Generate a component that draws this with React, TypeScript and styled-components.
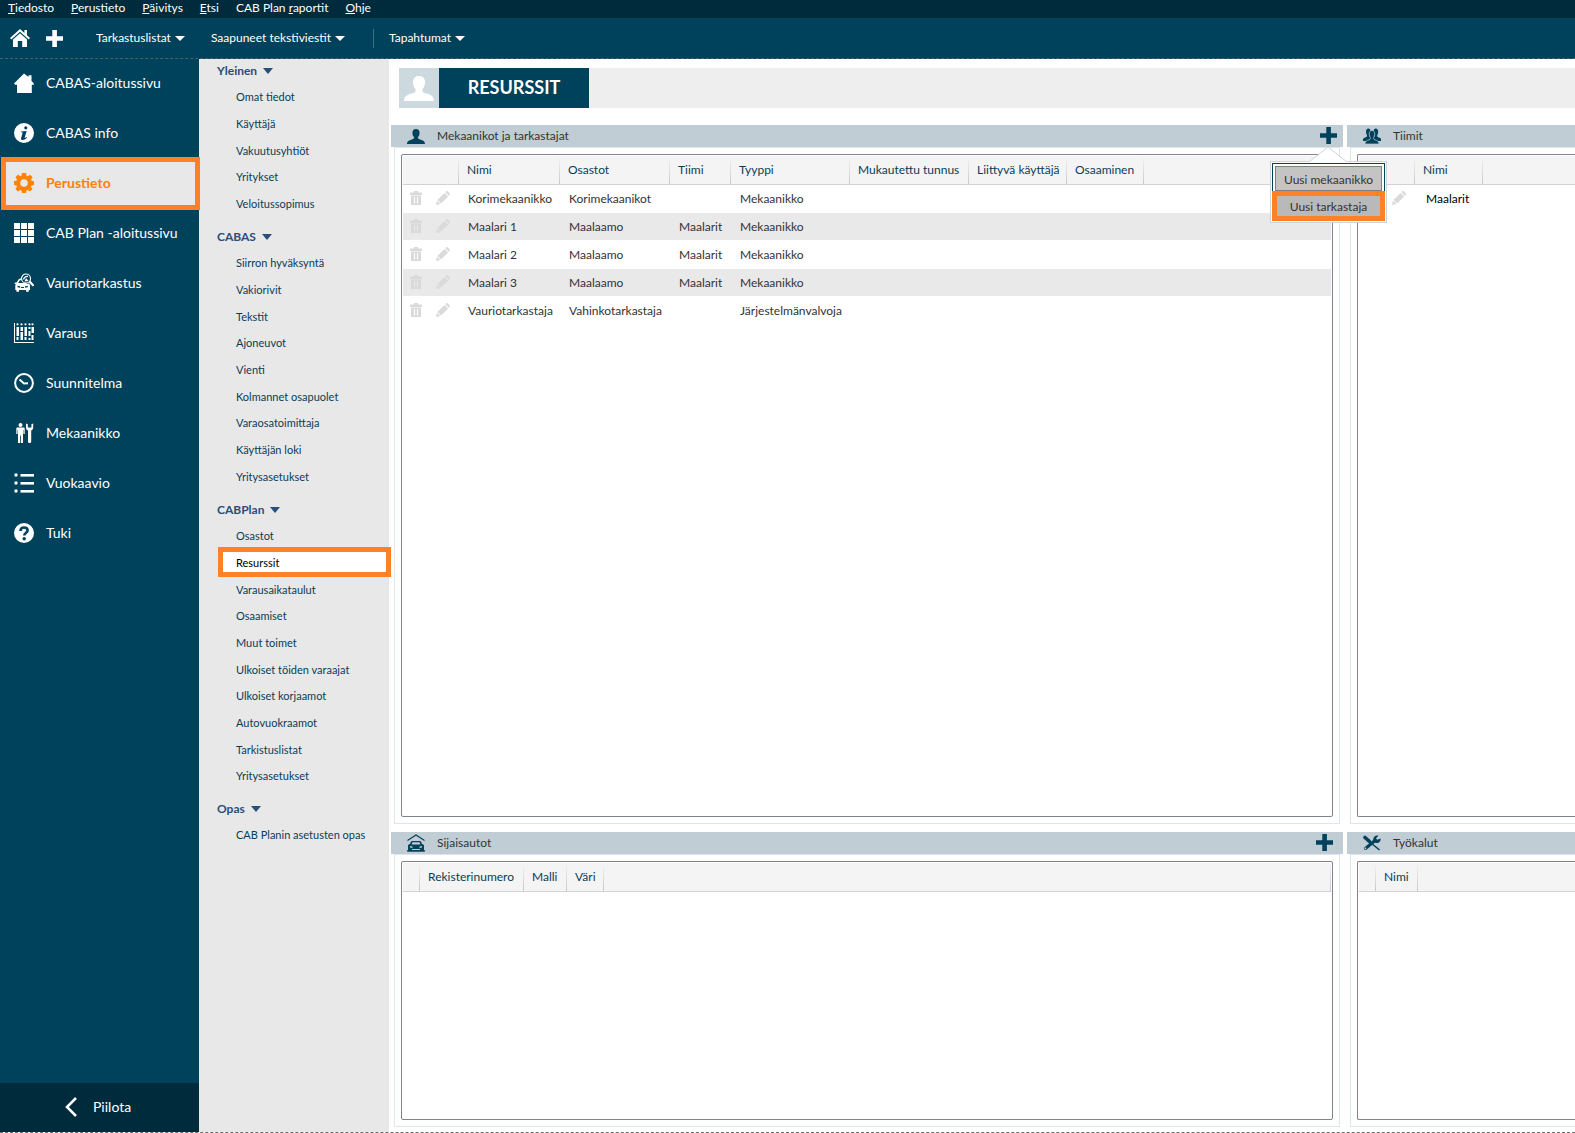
import React from 'react';
import styled, { createGlobalStyle, css } from 'styled-components';

const navy = '#00425c';
const deepNavy = '#002b3d';
const orange = '#ff8127';
const slate = '#c0cdd4';
const frame = '#dfe6e9';

const GlobalStyle = createGlobalStyle`
  *, *::before, *::after { box-sizing: border-box; }
  body {
    margin: 0;
    background: #fff;
    color: #333;
    font-family: Lato, "Open Sans", sans-serif;
    font-size: 12px;
    line-height: 16px;
  }
  button { font: inherit; color: inherit; background: none; border: 0; padding: 0; cursor: pointer; }
  a { color: inherit; text-decoration: none; }
  ul { list-style: none; margin: 0; padding: 0; }
  svg { display: block; flex: none; }
`;

const Page = styled.div`
  display: flex;
  flex-direction: column;
  height: 100vh;
  overflow: hidden;
  border-bottom: 1px dashed #6d6d6d;
`;

const MenuBar = styled.nav`
  display: flex;
  flex: none;
  gap: 17px;
  height: 18px;
  padding: 0 8px;
  background: ${deepNavy};
  color: #fff;
`;

const MenuButton = styled.button`
  white-space: nowrap;
  line-height: 16px;
  height: 16px;
`;

const Toolbar = styled.header`
  display: flex;
  flex: none;
  align-items: center;
  height: 41px;
  padding-left: 10px;
  background: ${navy};
  border-bottom: 1px dashed #46606c;
  color: #fff;
`;

const ToolIcons = styled.div`
  display: flex;
  align-items: center;
  gap: 16px;
  width: 86px;
`;

const ToolMenu = styled.button<{ $gap: number }>`
  display: flex;
  align-items: center;
  gap: 4px;
  margin-right: ${(p) => p.$gap}px;
  white-space: nowrap;
`;

const Caret = styled.span<{ $big?: boolean }>`
  border-style: solid;
  border-color: currentColor transparent transparent;
  border-width: ${(p) => (p.$big ? '6px 5px 0' : '5px 5px 0')};
`;

const Divider = styled.span`
  width: 1px;
  height: 19px;
  margin-right: 15px;
  background: #3f7086;
`;

const Body = styled.div`
  display: flex;
  flex: 1;
  min-height: 0;
`;

const Sidebar = styled.nav`
  display: flex;
  flex: none;
  flex-direction: column;
  justify-content: space-between;
  width: 199px;
  background: ${navy};
  color: #fff;
  font-size: 14px;
`;

const SideLink = styled.a<{ $active?: boolean }>`
  display: flex;
  align-items: center;
  gap: 12px;
  height: 50px;
  padding: 0 14px 2px;
  white-space: nowrap;
  ${(p) =>
    p.$active &&
    css`
      position: relative;
      z-index: 1;
      height: 53px;
      margin: -2px -1px -1px 1px;
      padding: 0 8px 2px;
      border: 5px solid ${orange};
      background: #e8e8e8;
      color: #ff8200;
      font-weight: 700;
    `}
`;

const HideButton = styled.button`
  display: flex;
  align-items: center;
  gap: 16px;
  height: 49px;
  padding: 0 0 2px 65px;
  background: ${deepNavy};
`;

const SubNav = styled.nav`
  display: flex;
  flex: none;
  flex-direction: column;
  gap: 8px;
  width: 190px;
  background: #e8e8e8;
  color: #0b3c55;
  font-size: 11px;
`;

const GroupToggle = styled.button`
  display: flex;
  align-items: center;
  gap: 6px;
  height: 24px;
  padding-left: 18px;
  color: #2a4d7c;
  font-size: 12px;
  font-weight: 700;
`;

const SubItem = styled.li`
  height: 27px;
  &:nth-child(3n):not(:last-child) { height: 26px; }
`;

const SubLink = styled.a<{ $active?: boolean }>`
  display: block;
  padding-left: 37px;
  line-height: 27px;
  white-space: nowrap;
  ${(p) =>
    p.$active &&
    css`
      position: relative;
      top: -2px;
      z-index: 1;
      margin: 0 -2px 0 19px;
      padding: 2px 0 0 13px;
      border: 5px solid ${orange};
      background: #fff;
      color: #000;
      line-height: 18px;
    `}
`;

const Main = styled.main`
  display: flex;
  flex: 1;
  flex-direction: column;
  min-width: 0;
  padding: 9px 0 5px 2px;
`;

const TitleBar = styled.div`
  display: flex;
  flex: none;
  height: 40px;
  margin: 0 0 17px 8px;
  background: #eee;
`;

const TitleIcon = styled.div`
  display: grid;
  place-items: center;
  width: 40px;
  background: #ccd9df;
  color: #fff;
`;

const Title = styled.h1`
  width: 150px;
  margin: 0;
  background: ${navy};
  color: #fff;
  font-size: 18px;
  line-height: 38px;
  text-align: center;
`;

const Panels = styled.div`
  display: grid;
  flex: 1;
  min-height: 0;
  grid-template-columns: minmax(0, 1fr) 228px;
  grid-template-rows: 699fr 295fr;
  gap: 8px 4px;
`;

const PanelBox = styled.section`
  display: flex;
  flex-direction: column;
  min-height: 0;
`;

const PanelHeader = styled.header<{ $end: number }>`
  display: flex;
  flex: none;
  align-items: center;
  height: 22px;
  padding: 0 ${(p) => p.$end}px 0 16px;
  background: ${slate};
`;

const HeaderIcon = styled.span`
  color: ${navy};
`;

const PanelTitle = styled.h2`
  flex: 1;
  margin: 0 0 0 12px;
  font-size: 12px;
  font-weight: 400;
  line-height: 20px;
`;

const PanelBody = styled.div<{ $cut?: boolean }>`
  display: flex;
  flex: 1;
  min-height: 0;
  margin: 0 3px;
  padding: 6px;
  border: 1px solid ${frame};
  ${(p) => p.$cut && 'margin-right: 0; padding-right: 0; border-right: 0;'}
`;

const Th = styled.th`
  height: 29px;
  padding: 0 0 1px 8px;
  border-bottom: 1px solid #d2d2d2;
  background: linear-gradient(#f4f4f4, #c8c8c8) right / 1px 100% no-repeat #f4f4f4;
  color: #0b3c55;
  font-weight: 400;
  text-align: left;
  white-space: nowrap;
`;

const GridFrame = styled.div<{ $cut?: boolean }>`
  flex: 1;
  min-width: 0;
  padding: 1px;
  border: 1px solid #80848f;
  border-radius: 2px;
  overflow: hidden;
  ${(p) =>
    p.$cut &&
    css`
      padding-right: 0;
      border-right: 0;
      border-radius: 2px 0 0 2px;
      ${Th}:last-child { background: #f4f4f4; }
    `}
`;

const Table = styled.table`
  width: 100%;
  table-layout: fixed;
  border-collapse: separate;
  border-spacing: 0;
`;

const Td = styled.td<{ $dark?: boolean }>`
  height: 28px;
  padding: 0 0 0 ${(p) => (p.$dark ? 11 : 9)}px;
  border-bottom: 1px solid #fff;
  color: ${(p) => (p.$dark ? '#000' : 'inherit')};
  white-space: nowrap;
`;

const Row = styled.tr`
  &:nth-child(even) td { background: #e9e9e9; }
`;

const RowActions = styled.div`
  display: flex;
  gap: 14px;
  padding-bottom: 1px;
  margin-left: -2px;
  color: #dadada;
`;

const AddWrap = styled.div`
  position: relative;
  display: flex;
  align-items: flex-start;
  height: 18px;
  color: ${navy};
`;

const Popup = styled.div`
  position: absolute;
  z-index: 5;
  top: 34px;
  right: -50px;
  width: 117px;
  padding: 1px;
  border: 1px solid #c8d6de;
  background: #fff;
  color: #333;
`;

const PopupArrow = styled.svg`
  position: absolute;
  top: -16px;
  left: 38px;
`;

const PopupFocus = styled.div`
  height: 28px;
  padding: 2px;
  border: 1px solid ${navy};
  border-bottom: 0;
`;

const PopupButton = styled.button<{ $marked?: boolean }>`
  display: block;
  width: 100%;
  height: 25px;
  padding-top: 2px;
  border: 1px solid #808080;
  background: #c4c4c4;
  line-height: 20px;
  white-space: nowrap;
  ${(p) =>
    p.$marked &&
    css`
      height: 30px;
      border: 5px solid ${orange};
      background: #b9b9b9;
      line-height: 16px;
    `}
`;

type IconProps = { size?: number };

const Svg = ({ size = 20, h, box = '0 0 20 20', children }: { size?: number; h?: number; box?: string; children: React.ReactNode }) => (
  <svg width={size} height={h ?? size} viewBox={box} fill="currentColor" aria-hidden="true">
    {children}
  </svg>
);

const RoofHome = () => (
  <Svg>
    <path d="M10 1 0 10l1.300 1.400L10 3.700l8.700 7.700L20 10l-3-2.700V2h-2.600v3Z" />
    <path d="M10 5.200 3 11.400V19h4.800v-6h4.400v6H17v-7.600Z" />
  </Svg>
);

const SolidHome = () => (
  <Svg>
    <path d="M10 .5 0 10.500l1.200 1.200H3V20h14.800v-8.300H20l-.5-1.600-2-2V2.300h-3V4Z" />
  </Svg>
);

const Info = () => (
  <Svg>
    <path
      fillRule="evenodd"
      d="M10 0a10 10 0 1 0 0 20 10 10 0 0 0 0-20Zm1.800 3.200a1.600 1.600 0 1 1 0 3.200 1.600 1.600 0 0 1 0-3.200ZM7 8.600 12.600 8l-1.900 6.400c-.2.800.4.700 1.800-.5l.5.600c-1.500 1.800-3 2.500-4.200 2.500-1.500 0-2-.9-1.600-2.300L8.600 10c.2-.6-.3-.8-1.600-.7Z"
    />
  </Svg>
);

const Gear = () => (
  <Svg>
    <path
      fillRule="evenodd"
      d="M8 0h4l.5 2.700 1.300.6L16 1.700 18.600 4.300l-1.500 2.200.5 1.300L20 8.200v3.800l-2.500.5-.6 1.300 1.600 2.200-2.600 2.600-2.200-1.600-1.300.6L12 20H8l-.5-2.500-1.300-.5L4 18.500 1.400 15.900 3 13.700l-.6-1.300L0 12V8.100l2.500-.4L3 6.400 1.500 4.200 4.100 1.600l2.200 1.600 1.200-.5Zm2 6.200a3.800 3.800 0 1 0 0 7.600 3.800 3.800 0 0 0 0-7.600Z"
    />
  </Svg>
);

const Tiles = () => (
  <Svg>
    {[0, 7, 14].map((y) => [0, 7, 14].map((x) => <rect key={`${x}-${y}`} x={x} y={y} width="6" height="6" />))}
  </Svg>
);

const CarSearch = () => (
  <Svg>
    <path
      fillRule="evenodd"
      d="M1 9.500h1.600L4.500 6.500C5 5.800 6 5.500 7 5.500V7c-.8 0-1.200.2-1.500.7L4.200 10h7.600c1 .6 2.200.8 3.200.6l1 1.400v5h-1.300v1.800h-2.600V17H5v1.800H2.400V17H1.300v-5L2 11H.4Zm2.500 3.200v1.600l2.700.5v-1.500Zm10.300 0-2.700.6v1.500l2.700-.5ZM7 14v1h3v-1Z"
    />
    <circle cx="12" cy="5.500" r="4.500" fill="none" stroke="currentColor" strokeWidth="1.200" />
    <path d="M9.500 6.500c.5-2 2.500-3.500 4.500-3" fill="none" stroke="currentColor" strokeWidth="1.300" />
    <path d="M10.500 8.500 12 5l2.500 3Z" />
    <path d="m14.600 9.200 1.600-1.600 4 4.400-1.400 1.500Z" />
  </Svg>
);

const Booking = () => (
  <Svg>
    <path d="M0 0h1v19h19v1H0Z" />
    {[3, 7, 11, 15, 18].map((x) => (
      <circle key={x} cx={x + 0.5} cy="1.300" r="1.100" />
    ))}
    <path d="M2.500 4h2.500v9H2.500zM2.500 14h2v3h-2zM6.500 4h2.500v4H6.500zM6.500 9h2.500v8H6.500zM10.500 4h2.500v9h-2.500zM10.500 14h2v3h-2zM14.500 8h2v5h-2zM14.500 4h2v2h-2zM17.500 4h2.500v6h-2.500zM17.500 12h2v5h-2zM14.500 15h2v2h-2z" />
  </Svg>
);

const Clock = () => (
  <Svg>
    <circle cx="10" cy="10" r="8.900" fill="none" stroke="currentColor" strokeWidth="2" />
    <path d="m5.500 6.500 4.500 4 4-.2" fill="none" stroke="currentColor" strokeWidth="2" />
  </Svg>
);

const Mechanic = () => (
  <Svg>
    <circle cx="6.500" cy="2" r="2" />
    <path d="M3.500 4.500h6c.8 0 1.200.4 1.200 1.200V11H9.400V6.800H9V20H6.900v-7.500h-.8V20H4V6.800h-.4V11H2.300V5.700c0-.8.400-1.200 1.200-1.200Z" />
    <path d="M12 .5v4c0 1.500.8 2.500 2 3V18.600a1.600 1.600 0 0 0 3.200 0V7.500c1.200-.5 2-1.500 2-3v-4l-1.800.8V4.500h-3.600V1.300Z" />
  </Svg>
);

const Flow = () => (
  <Svg>
    {[2, 10, 18].map((y) => (
      <React.Fragment key={y}>
        <circle cx="2" cy={y} r="1.700" />
        <rect x="6.500" y={y - 1} width="13.500" height="2.600" />
      </React.Fragment>
    ))}
  </Svg>
);

const Help = () => (
  <Svg>
    <circle cx="10" cy="10" r="10" />
    <path d="M6.500 8C6.500 5.500 8 4.500 10 4.500S13.600 5.700 13.600 7.500c0 2.300-3.300 2.300-3.300 5" fill="none" stroke={navy} strokeWidth="2.600" />
    <circle cx="10.200" cy="15.800" r="1.700" fill={navy} />
  </Svg>
);

const Plus = ({ size = 17 }: IconProps) => (
  <Svg size={size} box="0 0 17 17">
    <path d="M6.300 0h4.600v6.300H17v4.400h-6.100V17H6.300v-6.300H0V6.300h6.300Z" />
  </Svg>
);

const Chevron = () => (
  <Svg size={12} h={20} box="0 0 12 20">
    <path d="M11 1 2 10l9 9" fill="none" stroke="currentColor" strokeWidth="2.500" />
  </Svg>
);

const personPath = 'M15 0c4 0 6 2.500 6 6.500 0 3-1 5-2.500 6.500v2.500c0 .8 1 1.200 3 1.800 5 1.500 8.500 2.500 8.500 7.700H0c0-5.200 3.500-6.200 8.500-7.700 2-.6 3-1 3-1.800V13C10 11.500 9 9.500 9 6.500 9 2.500 11 0 15 0Z';

const Person = ({ size = 30 }: IconProps) => (
  <Svg size={size} h={Math.round((size * 25) / 30)} box="0 0 30 25">
    <path d={personPath} />
  </Svg>
);

const People = () => (
  <Svg size={18} h={16} box="0 0 36 32">
    <path d={personPath} transform="translate(-1 1) scale(.78 1)" />
    <path d={personPath} transform="translate(14 1) scale(.78 1)" />
    <path d={personPath} transform="translate(4 5) scale(.93 1.080)" stroke={slate} strokeWidth="1.400" />
  </Svg>
);

const Garage = () => (
  <Svg size={18} box="0 0 18 18">
    <path d="M.5 6.500 9 1l8.500 5.500" fill="none" stroke="currentColor" strokeWidth="1.200" />
    <path
      fillRule="evenodd"
      d="M5 7h8c1 0 1.500 1.500 2 3 1.400.3 2 1 2 2v4h.8v1.800H.2V16H1v-4c0-1 .6-1.700 2-2 .5-1.500 1-3 2-3Zm.4 1.300L4.700 10.500h8.600l-.7-2.200ZM3 12v1.600l2.500.3v-1.300Zm12 0-2.500.6v1.300l2.500-.3ZM5 15v1h8v-1Z"
    />
  </Svg>
);

const Tools = () => (
  <Svg size={18} h={16} box="0 0 18 16">
    <path d="M1.500 2.500 16.500 15" stroke="currentColor" strokeWidth="1.500" />
    <path d="M2 2.500 6.500 6.500" stroke="currentColor" strokeWidth="3.600" strokeLinecap="round" />
    <path d="M2.500 13.500 12 5.500" stroke="currentColor" strokeWidth="3" strokeLinecap="round" />
    <path d="M15.500.8 13 3.200l1.200 1.600 3.400-1.300c.4 2.900-1.600 5-4.600 4.500-2.200-.4-3.200-2.200-2.700-4.300C11 1.200 13.200 0 15.500.8Z" />
    <circle cx="2.500" cy="13.400" r=".9" fill={slate} />
  </Svg>
);

const Trash = () => (
  <Svg size={12} h={14} box="0 0 12 14">
    <path fillRule="evenodd" d="M4 0h4v1.500h4V4H0V1.500h4ZM1 4.500h10V14H1ZM4 6v6.500h1V6Zm3 0v6.500h1V6Z" />
  </Svg>
);

const Pencil = () => (
  <Svg size={14} box="0 0 14 14">
    <path d="m0 14 1-4.500L4.500 13ZM1.600 8.700 8.600 1.900l3.500 3.500-7 7ZM9.300 1.200 10.500 0H11.500L14 2.500V3.500L12.800 4.700Z" />
  </Svg>
);

const menus: [string, string, string][] = [
  ['', 'T', 'iedosto'],
  ['', 'P', 'erustieto'],
  ['', 'P', 'äivitys'],
  ['', 'E', 'tsi'],
  ['CAB Plan ', 'r', 'aportit'],
  ['', 'O', 'hje'],
];

const sideItems: [string, React.ReactNode][] = [
  ['CABAS-aloitussivu', <SolidHome />],
  ['CABAS info', <Info />],
  ['Perustieto', <Gear />],
  ['CAB Plan -aloitussivu', <Tiles />],
  ['Vauriotarkastus', <CarSearch />],
  ['Varaus', <Booking />],
  ['Suunnitelma', <Clock />],
  ['Mekaanikko', <Mechanic />],
  ['Vuokaavio', <Flow />],
  ['Tuki', <Help />],
];

const groups: { title: string; items: string[] }[] = [
  { title: 'Yleinen', items: ['Omat tiedot', 'Käyttäjä', 'Vakuutusyhtiöt', 'Yritykset', 'Veloitussopimus'] },
  {
    title: 'CABAS',
    items: ['Siirron hyväksyntä', 'Vakiorivit', 'Tekstit', 'Ajoneuvot', 'Vienti', 'Kolmannet osapuolet', 'Varaosatoimittaja', 'Käyttäjän loki', 'Yritysasetukset'],
  },
  {
    title: 'CABPlan',
    items: ['Osastot', 'Resurssit', 'Varausaikataulut', 'Osaamiset', 'Muut toimet', 'Ulkoiset töiden varaajat', 'Ulkoiset korjaamot', 'Autovuokraamot', 'Tarkistuslistat', 'Yritysasetukset'],
  },
  { title: 'Opas', items: ['CAB Planin asetusten opas'] },
];

type Column = [label: string, width: number];

const staffColumns: Column[] = [
  ['', 56], ['Nimi', 101], ['Osastot', 110], ['Tiimi', 61], ['Tyyppi', 119],
  ['Mukautettu tunnus', 119], ['Liittyvä käyttäjä', 98], ['Osaaminen', 77],
];

const staffRows = [
  ['Korimekaanikko', 'Korimekaanikot', '', 'Mekaanikko'],
  ['Maalari 1', 'Maalaamo', 'Maalarit', 'Mekaanikko'],
  ['Maalari 2', 'Maalaamo', 'Maalarit', 'Mekaanikko'],
  ['Maalari 3', 'Maalaamo', 'Maalarit', 'Mekaanikko'],
  ['Vauriotarkastaja', 'Vahinkotarkastaja', '', 'Järjestelmänvalvoja'],
];

const DataTable = ({ columns, rows = [], dark }: { columns: Column[]; rows?: string[][]; dark?: boolean }) => (
  <Table>
    <colgroup>
      {columns.map(([, width], i) => (
        <col key={i} width={width} />
      ))}
      <col />
    </colgroup>
    <thead>
      <tr>
        {columns.map(([label], i) => (
          <Th key={i}>{label}</Th>
        ))}
        <Th />
      </tr>
    </thead>
    <tbody>
      {rows.map((cells) => (
        <Row key={cells[0]}>
          <Td>
            <RowActions>
              <button aria-label="Poista"><Trash /></button>
              <button aria-label="Muokkaa"><Pencil /></button>
            </RowActions>
          </Td>
          {columns.slice(1).map((_, i) => (
            <Td key={i} $dark={dark}>{cells[i]}</Td>
          ))}
          <Td />
        </Row>
      ))}
    </tbody>
  </Table>
);

type PanelProps = {
  icon: React.ReactNode;
  title: string;
  end?: number;
  cut?: boolean;
  action?: React.ReactNode;
  children: React.ReactNode;
};

const Panel = ({ icon, title, end = 0, cut, action, children }: PanelProps) => (
  <PanelBox>
    <PanelHeader $end={end}>
      <HeaderIcon>{icon}</HeaderIcon>
      <PanelTitle>{title}</PanelTitle>
      {action}
    </PanelHeader>
    <PanelBody $cut={cut}>
      <GridFrame $cut={cut}>{children}</GridFrame>
    </PanelBody>
  </PanelBox>
);

export default function App() {
  return (
    <Page>
      <GlobalStyle />
      <MenuBar>
        {menus.map(([before, key, after]) => (
          <MenuButton key={key + after}>
            {before}
            <u>{key}</u>
            {after}
          </MenuButton>
        ))}
      </MenuBar>
      <Toolbar>
        <ToolIcons>
          <button aria-label="Aloitussivu"><RoofHome /></button>
          <button aria-label="Uusi"><Plus /></button>
        </ToolIcons>
        <ToolMenu $gap={26}>Tarkastuslistat <Caret /></ToolMenu>
        <ToolMenu $gap={28}>Saapuneet tekstiviestit <Caret /></ToolMenu>
        <Divider />
        <ToolMenu $gap={0}>Tapahtumat <Caret /></ToolMenu>
      </Toolbar>
      <Body>
        <Sidebar>
          <ul>
            {sideItems.map(([label, icon]) => (
              <li key={label}>
                <SideLink href="#" $active={label === 'Perustieto'}>
                  {icon}
                  {label}
                </SideLink>
              </li>
            ))}
          </ul>
          <HideButton><Chevron />Piilota</HideButton>
        </Sidebar>
        <SubNav>
          {groups.map((group) => (
            <div key={group.title}>
              <GroupToggle>{group.title} <Caret $big /></GroupToggle>
              <ul>
                {group.items.map((item) => (
                  <SubItem key={item}>
                    <SubLink href="#" $active={item === 'Resurssit'}>{item}</SubLink>
                  </SubItem>
                ))}
              </ul>
            </div>
          ))}
        </SubNav>
        <Main>
          <TitleBar>
            <TitleIcon><Person /></TitleIcon>
            <Title>RESURSSIT</Title>
          </TitleBar>
          <Panels>
            <Panel
              icon={<Person size={18} />}
              title="Mekaanikot ja tarkastajat"
              end={6}
              action={
                <AddWrap>
                  <button aria-label="Lisää resurssi"><Plus /></button>
                  <Popup>
                    <PopupArrow width="38" height="17" viewBox="0 0 38 17">
                      <path d="M0 17V16L19 1l19 15v1Z" fill="#fff" />
                      <path d="M0 16 19 1l19 15" fill="none" stroke="#c8d6de" />
                    </PopupArrow>
                    <PopupFocus>
                      <PopupButton>Uusi mekaanikko</PopupButton>
                    </PopupFocus>
                    <PopupButton $marked>Uusi tarkastaja</PopupButton>
                  </Popup>
                </AddWrap>
              }
            >
              <DataTable columns={staffColumns} rows={staffRows} />
            </Panel>
            <Panel icon={<People />} title="Tiimit" cut>
              <DataTable columns={[['', 56], ['Nimi', 68]]} rows={[['Maalarit']]} dark />
            </Panel>
            <Panel
              icon={<Garage />}
              title="Sijaisautot"
              end={10}
              action={<AddWrap><button aria-label="Lisää sijaisauto"><Plus /></button></AddWrap>}
            >
              <DataTable columns={[['', 17], ['Rekisterinumero', 104], ['Malli', 43], ['Väri', 37]]} />
            </Panel>
            <Panel icon={<Tools />} title="Työkalut" cut>
              <DataTable columns={[['', 17], ['Nimi', 42]]} />
            </Panel>
          </Panels>
        </Main>
      </Body>
    </Page>
  );
}
